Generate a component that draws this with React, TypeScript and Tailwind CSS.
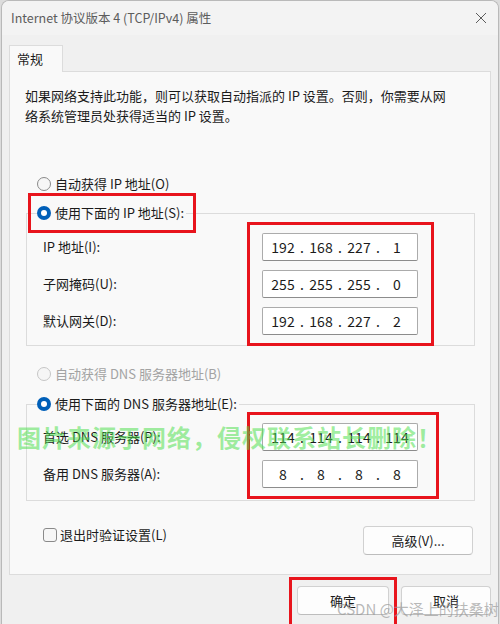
import React from "react";

const FONT = '"Noto Sans CJK SC", "Noto Sans", "Liberation Sans", sans-serif';

const Radio = ({
  checked,
  disabled,
  label,
}: {
  checked?: boolean;
  disabled?: boolean;
  label: string;
}) => (
  <span className="flex h-[20px] items-center gap-[4px]">
    {checked ? (
      <span className="flex h-[14px] w-[14px] items-center justify-center rounded-full bg-[#005fb8]">
        <span className="h-[6px] w-[6px] rounded-full bg-white" />
      </span>
    ) : (
      <span
        className={`h-[14px] w-[14px] rounded-full border bg-[#f6f6f6] ${
          disabled ? "border-[#c6c6c6]" : "border-[#8a8a8a]"
        }`}
      />
    )}
    <span className={`text-[13px] ${disabled ? "text-[#a3a3a3]" : "text-[#1b1b1b]"}`}>
      {label}
    </span>
  </span>
);

const IpField = ({ parts }: { parts: string[] }) => (
  <div className="flex h-[28px] w-[156px] items-center rounded-[2px] border border-[#ababab] border-b-[#8c8c8c] bg-white pl-[6px] text-[14px] text-[#1b1b1b]">
    {parts.map((p, i) => (
      <React.Fragment key={i}>
        <span className="w-[28px] text-center">{p}</span>
        {i < 3 && <span className="w-[10px] text-center">.</span>}
      </React.Fragment>
    ))}
  </div>
);

const Row = ({ label, parts }: { label: string; parts: string[] }) => (
  <div className="flex items-center">
    <span className="w-[225px] flex-none pl-[6px] text-[13px] text-[#1b1b1b]">{label}</span>
    <IpField parts={parts} />
  </div>
);

const Button = ({ label, w }: { label: string; w: string }) => (
  <button
    type="button"
    className={`${w} h-[29px] rounded-[4px] border border-[#d1d1d1] border-b-[#bdbdbd] bg-[#fdfdfd] text-[13px] text-[#1b1b1b]`}
  >
    {label}
  </button>
);

const App = () => {
  return (
    <div className="relative h-[624px] w-[500px] overflow-hidden bg-[#dcdcdc]" style={{ fontFamily: FONT }}>
      <div className="ml-[1px] h-[624px] w-[498px] overflow-hidden rounded-t-[8px] border-x border-t border-[#b9b9b9] bg-[#f0f0f0]">
        <div className="flex h-[34px] items-center justify-between bg-[#f3f3f3] pl-[9px] pr-[10px]">
          <span className="text-[12.5px] text-[#5c5c5c]">Internet 协议版本 4 (TCP/IPv4) 属性</span>
          <svg width="12" height="12" viewBox="0 0 12 12" className="mr-[1px]">
            <path d="M1 1 L11 11 M11 1 L1 11" stroke="#5c5c5c" strokeWidth="1" />
          </svg>
        </div>

        <div className="pl-[7px]">
          <div className="relative z-10 mt-[10px] -mb-[1px] flex h-[27px] w-[54px] items-center border border-b-0 border-[#dcdcdc] bg-[#f9f9f9] pl-[7px] text-[13px] text-[#1b1b1b]">
            常规
          </div>
          <div className="h-[504px] w-[482px] border border-[#dcdcdc] bg-[#f9f9f9] pl-[15px] pt-[14px]">
            <p className="text-[13px] leading-[20px] text-[#1b1b1b]">
              如果网络支持此功能，则可以获取自动指派的 IP 设置。否则，你需要从网
              <br />
              络系统管理员处获得适当的 IP 设置。
            </p>

            <div className="ml-[12px] mt-[48px]">
              <Radio label="自动获得 IP 地址(O)" />
            </div>

            <fieldset className="ml-[1px] mt-[9px] w-[449px] border border-[#dcdcdc] px-[10px] pb-[10px]">
              <legend className="pr-[2px]">
                <Radio checked label="使用下面的 IP 地址(S):" />
              </legend>
              <div className="mt-[10px] flex flex-col gap-[9px]">
                <Row label="IP 地址(I):" parts={["192", "168", "227", "1"]} />
                <Row label="子网掩码(U):" parts={["255", "255", "255", "0"]} />
                <Row label="默认网关(D):" parts={["192", "168", "227", "2"]} />
              </div>
            </fieldset>

            <div className="ml-[12px] mt-[18px]">
              <Radio disabled label="自动获得 DNS 服务器地址(B)" />
            </div>

            <fieldset className="ml-[1px] mt-[10px] w-[449px] border border-[#dcdcdc] px-[10px] pb-[12px]">
              <legend className="pr-[2px]">
                <Radio checked label="使用下面的 DNS 服务器地址(E):" />
              </legend>
              <div className="mt-[9px] flex flex-col gap-[9px]">
                <Row label="首选 DNS 服务器(P):" parts={["114", "114", "114", "114"]} />
                <Row label="备用 DNS 服务器(A):" parts={["8", "8", "8", "8"]} />
              </div>
            </fieldset>

            <div className="ml-[18px] mt-[24px] flex w-[430px] items-start justify-between">
              <span className="flex h-[20px] items-center gap-[3px]">
                <span className="h-[14px] w-[14px] rounded-[3px] border border-[#8a8a8a] bg-[#f6f6f6]" />
                <span className="text-[13px] text-[#1b1b1b]">退出时验证设置(L)</span>
              </span>
              <div className="mt-[1px]">
                <Button label="高级(V)..." w="w-[110px]" />
              </div>
            </div>
          </div>

          <div className="mt-[11px] flex w-[482px] justify-end gap-[12px]">
            <Button label="确定" w="w-[92px]" />
            <Button label="取消" w="w-[90px]" />
          </div>
        </div>
      </div>

      {/* annotations */}
      <div className="absolute left-[28px] top-[193px] h-[40px] w-[168px] border-[3px] border-[#e8141c]" />
      <div className="absolute left-[247px] top-[222px] h-[124px] w-[187px] border-[3px] border-[#e8141c]" />
      <div className="absolute left-[247px] top-[412px] h-[87px] w-[192px] border-[3px] border-[#e8141c]" />
      <div className="absolute left-[289px] top-[577px] h-[60px] w-[108px] border-[3px] border-[#e8141c]" />

      <div className="absolute left-[17px] top-[420px] whitespace-nowrap text-[24px] font-bold leading-[34px] tracking-[1px] text-[#4fe04f]/55">
        图片来源于网络，侵权联系站长删除！
      </div>
      <div className="absolute left-[337px] top-[598px] whitespace-nowrap text-[15px] leading-[22px] text-[#9a9a9a]/70">
        CSDN @大泽上的扶桑树
      </div>
    </div>
  );
};

export default App;
